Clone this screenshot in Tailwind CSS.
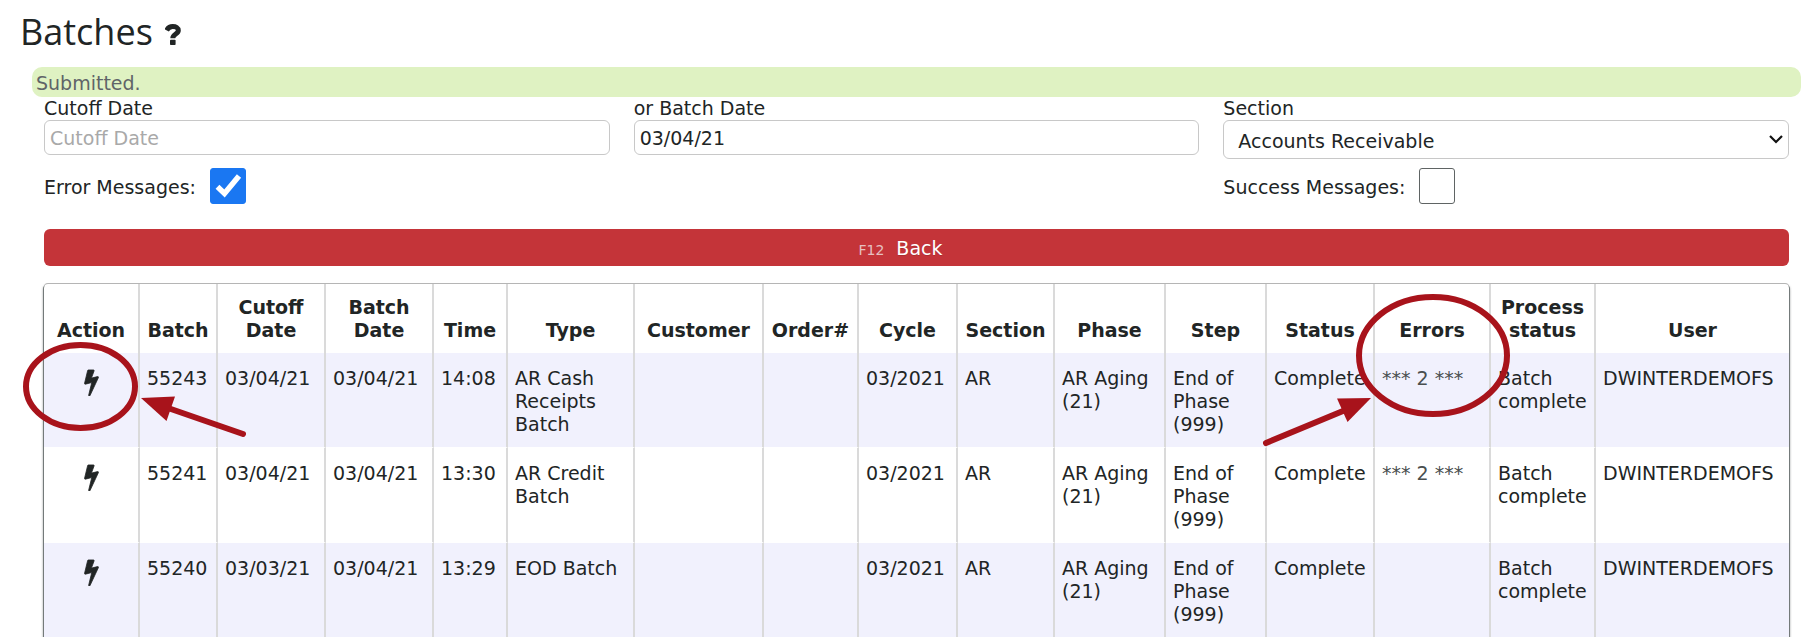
<!DOCTYPE html>
<html lang="en">
<head>
    <meta charset="UTF-8">
    <meta name="viewport" content="width=device-width, initial-scale=1.0">
    <title>Batches</title>
    <script src="https://cdn.jsdelivr.net/npm/@tailwindcss/browser@4"></script>
</head>
<body class="bg-white text-[#212525] font-['DejaVu_Sans',Verdana,sans-serif] text-[19px] leading-[23px]">

    <!-- icons shared by the page -->
    <svg class="hidden">
        <symbol id="bolt" viewBox="0 0 896 1792">
            <path fill="currentColor" stroke="currentColor" stroke-width="50" d="M885 566q18 20 7 44l-540 1157q-13 25-42 25-4 0-14-2-17-5-25.500-19t-4.500-30l197-808-406 101q-4 1-12 1-18 0-31-11-18-15-13-39l201-825q4-16 16-26t28-10h328q19 0 32 12.500t13 29.500q0 8-5 18l-171 463 396-98q8-2 12-2 19 0 34 17z"/>
        </symbol>
    </svg>

    <div class="relative">

        <header class="flex items-center gap-3 h-[67px] pl-5 pb-1">
            <h1 class="font-['Open_Sans',sans-serif] text-[36px] leading-[44px]">Batches</h1>
            <a href="#help" aria-label="Help" class="pt-1.5">
                <svg class="w-4 h-[21px]" viewBox="0 0 16 21" fill="none">
                    <path stroke="currentColor" stroke-width="5" d="M1.600 6.400C3 3.600 5 2.500 7.700 2.500c3.200 0 5.600 1.500 5.600 3.900 0 3.800-5.500 3.400-5.500 7.800"/>
                    <rect x="5" y="15.700" width="5.600" height="5.300" rx=".8" fill="currentColor"/>
                </svg>
            </a>
        </header>

        <p class="ml-8 mr-[10px] h-[30px] pl-1 pt-[5px] rounded-[10px] bg-[#dff2c2] text-[#5f6468]">Submitted.</p>

        <main class="pl-11 pr-[22px]">
            <form>
                <div class="grid grid-cols-3 gap-x-6">
                    <div>
                        <label for="cutoff" class="block">Cutoff Date</label>
                        <input id="cutoff" type="text" placeholder="Cutoff Date" class="block w-full h-[35px] px-[5px] border border-[#c8c8c8] rounded-md placeholder:text-[#a9a9a9]">
                    </div>
                    <div>
                        <label for="batch" class="block">or Batch Date</label>
                        <input id="batch" type="text" value="03/04/21" class="block w-full h-[35px] px-[5px] border border-[#c8c8c8] rounded-md">
                    </div>
                    <div>
                        <label for="section" class="block">Section</label>
                        <div class="relative">
                            <select id="section" class="block w-full h-[39px] pl-[14px] pt-1 border border-[#c8c8c8] rounded-md bg-white appearance-none">
                                <option>Accounts Receivable</option>
                            </select>
                            <svg class="absolute right-1.5 top-3 w-[14px] h-[14px] pointer-events-none" viewBox="0 0 14 14" fill="none" stroke="#111" stroke-width="2.200"><path d="M1 4l6 6 6-6"/></svg>
                        </div>
                    </div>
                </div>

                <div class="grid grid-cols-3 gap-x-6 mt-[9px]">
                    <div class="flex items-center gap-3.5">
                        <label for="errors" class="pt-0.5">Error Messages:</label>
                        <span class="relative">
                            <input id="errors" type="checkbox" checked class="block size-9 appearance-none rounded-[3px] border border-[#5f6464] checked:bg-[#1a77f2] checked:border-[#1a77f2]">
                            <svg class="absolute inset-0 size-9 pointer-events-none" viewBox="0 0 36 36" fill="none" stroke="#fff" stroke-width="5.500"><path d="M7.500 18.800l7 6.700L29 8"/></svg>
                        </span>
                    </div>
                    <div class="col-start-3 flex items-center gap-3.5">
                        <label for="success" class="pt-0.5">Success Messages:</label>
                        <input id="success" type="checkbox" class="block size-9 appearance-none rounded-[3px] border border-[#5f6464]">
                    </div>
                </div>

                <button type="button" class="flex items-baseline justify-center gap-3 w-full mt-[25px] h-[37px] pt-2 pr-8 rounded-md bg-[#c43439] text-white">
                    <span class="text-[14px] text-[#e6c0c1]">F12</span>
                    <span class="text-shadow-2xs">Back</span>
                </button>
            </form>

            <table class="mt-[18px] w-full table-fixed border-separate border-spacing-0 rounded-t-sm shadow-[-1px_1px_0_#747a7a,1px_1px_0_#747a7a,0_-1px_0_#b5b5b5,0_2px_3px_#1f2424] [&_th]:px-1 [&_th]:pt-3 [&_th]:pb-[11px] [&_th]:align-bottom [&_td]:px-[7px] [&_td]:pt-[14px] [&_td]:pb-[11px] [&_td]:align-top [&_th]:border-r-2 [&_td]:border-r-2 [&_th]:border-r-[#dadada] [&_td]:border-r-[#dadada] [&_td]:border-b [&_td]:border-b-white [&_th:last-child]:border-r-0 [&_td:last-child]:border-r-0 [&_tbody_tr:nth-child(odd)]:bg-[#f1f1fd]">
                <colgroup>
                    <col class="w-[96px]"><col class="w-[78px]"><col class="w-[108px]"><col class="w-[108px]">
                    <col class="w-[74px]"><col class="w-[127px]"><col class="w-[129px]"><col class="w-[95px]">
                    <col class="w-[99px]"><col class="w-[97px]"><col class="w-[111px]"><col class="w-[101px]">
                    <col class="w-[108px]"><col class="w-[116px]"><col class="w-[105px]"><col class="w-[193px]">
                </colgroup>
                <thead>
                    <tr>
                        <th>Action</th>
                        <th>Batch</th>
                        <th>Cutoff Date</th>
                        <th>Batch Date</th>
                        <th>Time</th>
                        <th>Type</th>
                        <th>Customer</th>
                        <th>Order#</th>
                        <th>Cycle</th>
                        <th>Section</th>
                        <th>Phase</th>
                        <th>Step</th>
                        <th>Status</th>
                        <th>Errors</th>
                        <th>Process status</th>
                        <th>User</th>
                    </tr>
                </thead>
                <tbody>
                    <tr>
                        <td><a href="#55243" aria-label="Action" class="flex justify-center pt-px"><svg class="w-[15px] h-7 overflow-visible"><use href="#bolt"/></svg></a></td>
                        <td>55243</td>
                        <td>03/04/21</td>
                        <td>03/04/21</td>
                        <td>14:08</td>
                        <td>AR Cash Receipts Batch</td>
                        <td></td>
                        <td></td>
                        <td>03/2021</td>
                        <td>AR</td>
                        <td>AR Aging (21)</td>
                        <td>End of Phase (999)</td>
                        <td>Complete</td>
                        <td><a href="#errors-55243" class="text-[#4a4f4f] whitespace-nowrap">*** 2 ***</a></td>
                        <td>Batch complete</td>
                        <td>DWINTERDEMOFS</td>
                    </tr>
                    <tr>
                        <td><a href="#55241" aria-label="Action" class="flex justify-center pt-px"><svg class="w-[15px] h-7 overflow-visible"><use href="#bolt"/></svg></a></td>
                        <td>55241</td>
                        <td>03/04/21</td>
                        <td>03/04/21</td>
                        <td>13:30</td>
                        <td>AR Credit Batch</td>
                        <td></td>
                        <td></td>
                        <td>03/2021</td>
                        <td>AR</td>
                        <td>AR Aging (21)</td>
                        <td>End of Phase (999)</td>
                        <td>Complete</td>
                        <td><a href="#errors-55241" class="text-[#4a4f4f] whitespace-nowrap">*** 2 ***</a></td>
                        <td>Batch complete</td>
                        <td>DWINTERDEMOFS</td>
                    </tr>
                    <tr>
                        <td><a href="#55240" aria-label="Action" class="flex justify-center pt-px"><svg class="w-[15px] h-7 overflow-visible"><use href="#bolt"/></svg></a></td>
                        <td>55240</td>
                        <td>03/03/21</td>
                        <td>03/04/21</td>
                        <td>13:29</td>
                        <td>EOD Batch</td>
                        <td></td>
                        <td></td>
                        <td>03/2021</td>
                        <td>AR</td>
                        <td>AR Aging (21)</td>
                        <td>End of Phase (999)</td>
                        <td>Complete</td>
                        <td></td>
                        <td>Batch complete</td>
                        <td>DWINTERDEMOFS</td>
                    </tr>
                </tbody>
            </table>
        </main>

        <!-- red callouts over the action and errors columns -->
        <svg class="absolute left-0 top-[284px] w-[260px] h-[160px] pointer-events-none" viewBox="0 284 260 160" fill="none" stroke="#a8131b">
            <ellipse cx="80.500" cy="386.500" rx="54.500" ry="41.500" stroke-width="6"/>
            <path d="M243 434L168 408" stroke-width="6" stroke-linecap="round"/>
            <path d="M141 398l34-1.500-8.500 24.500z" fill="#a8131b" stroke="none"/>
        </svg>
        <svg class="absolute right-[291px] top-[284px] w-[260px] h-[170px] pointer-events-none" viewBox="1260 284 260 170" fill="none" stroke="#a8131b">
            <ellipse cx="1433" cy="355.500" rx="74" ry="58.500" stroke-width="6"/>
            <path d="M1266 443L1343 411" stroke-width="6" stroke-linecap="round"/>
            <path d="M1371 398l-34 .5 10.500 23.500z" fill="#a8131b" stroke="none"/>
        </svg>
    </div>
</body>
</html>
